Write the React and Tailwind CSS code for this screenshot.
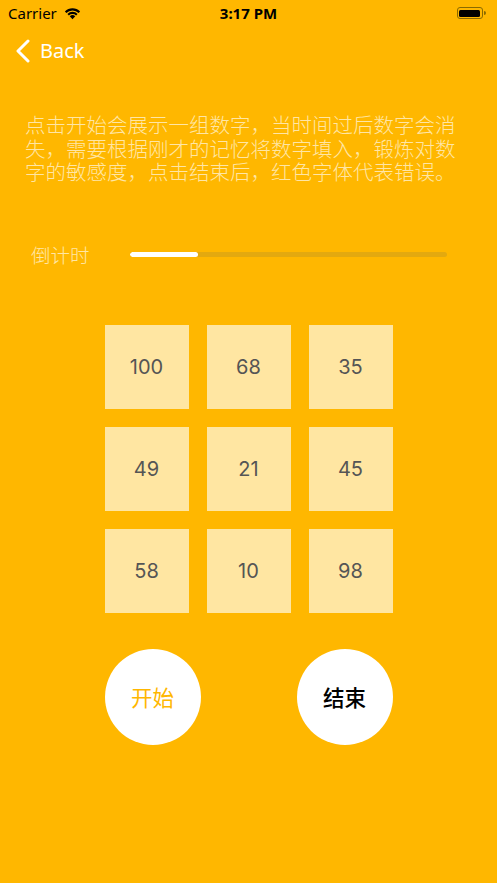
import React from "react";

const numbers = [100, 68, 35, 49, 21, 45, 58, 10, 98];

const StatusBar = () => (
  <div className="h-[26px] flex items-center justify-between px-[8px] text-black">
    <div className="flex items-center gap-[6px] w-[120px]">
      <span className="text-[15px] leading-none">Carrier</span>
      <svg width="19" height="14" viewBox="0 0 18 13">
        <path d="M9 12.5 L6.4 9.6 A3.8 3.8 0 0 1 11.6 9.6 Z" fill="#000" />
        <path d="M4.2 7.4 A6.8 6.8 0 0 1 13.8 7.4 L12.4 8.9 A4.8 4.8 0 0 0 5.6 8.9 Z" fill="#000" />
        <path d="M1.8 5 A10.2 10.2 0 0 1 16.2 5 L14.8 6.5 A8.2 8.2 0 0 0 3.2 6.5 Z" fill="#000" />
      </svg>
    </div>
    <span className="text-[15px] font-bold leading-none">3:17 PM</span>
    <div className="w-[120px] flex justify-end items-center pr-[3px]">
      <div className="w-[26px] h-[12px] rounded-[3px] border border-[#8a6a00] p-[1.5px]">
        <div className="w-full h-full bg-black rounded-[1.5px]" />
      </div>
      <div className="w-[2px] h-[4px] bg-[#8a6a00] rounded-r-sm ml-[1px]" />
    </div>
  </div>
);

export default function App() {
  return (
    <div
      className="w-[497px] h-[883px] bg-[#FFB700] flex flex-col overflow-hidden"
      style={{ fontFamily: '"Noto Sans", "Noto Sans CJK SC", sans-serif' }}
    >
      <StatusBar />

      {/* nav */}
      <div className="h-[50px] flex items-center pl-[15px] text-white">
        <svg width="16" height="24" viewBox="0 0 16 24" fill="none">
          <path d="M13 2 L3 12 L13 22" stroke="#fff" strokeWidth="3" strokeLinecap="round" strokeLinejoin="round" />
        </svg>
        <span className="ml-[9px] text-[20px] leading-none">Back</span>
      </div>

      {/* description */}
      <p
        className="mt-[37px] px-[25px] text-[20.5px] leading-[23.5px] font-light text-[#FFE6A6]"
        style={{ fontFamily: '"Noto Sans CJK SC", sans-serif' }}
      >
        点击开始会展示一组数字，当时间过后数字会消失，需要根据刚才的记忆将数字填入，锻炼对数字的敏感度，点击结束后，红色字体代表错误。
      </p>

      {/* countdown */}
      <div className="mt-[61px] flex items-center pl-[31px] pr-[50px]">
        <span
          className="text-[19.5px] leading-none font-light text-[#FFE6A6]"
          style={{ fontFamily: '"Noto Sans CJK SC", sans-serif' }}
        >
          倒计时
        </span>
        <div className="ml-[40px] flex-1 h-[5px] rounded-full bg-[#E3A90F] overflow-hidden">
          <div className="h-full w-[68px] bg-white rounded-full" />
        </div>
      </div>

      {/* number grid */}
      <div className="mt-[61px] mx-auto grid grid-cols-[84px_84px_84px] gap-[18px]">
        {numbers.map((n) => (
          <div
            key={n}
            className="w-[84px] h-[84px] bg-[#FFE6A2] flex items-center justify-center text-[20px] text-[#555555]"
            style={{ fontFamily: "Inter, sans-serif" }}
          >
            {n}
          </div>
        ))}
      </div>

      {/* buttons */}
      <div className="mt-[36px] flex justify-between w-[288px] mx-auto">
        <button
          className="w-[96px] h-[96px] rounded-full bg-white text-[#FFB700] text-[21.5px] flex items-center justify-center"
          style={{ fontFamily: '"Noto Sans CJK SC", sans-serif' }}
        >
          开始
        </button>
        <button
          className="w-[96px] h-[96px] rounded-full bg-white text-black text-[21.5px] font-medium flex items-center justify-center"
          style={{ fontFamily: '"Noto Sans CJK SC", sans-serif' }}
        >
          结束
        </button>
      </div>
    </div>
  );
}
